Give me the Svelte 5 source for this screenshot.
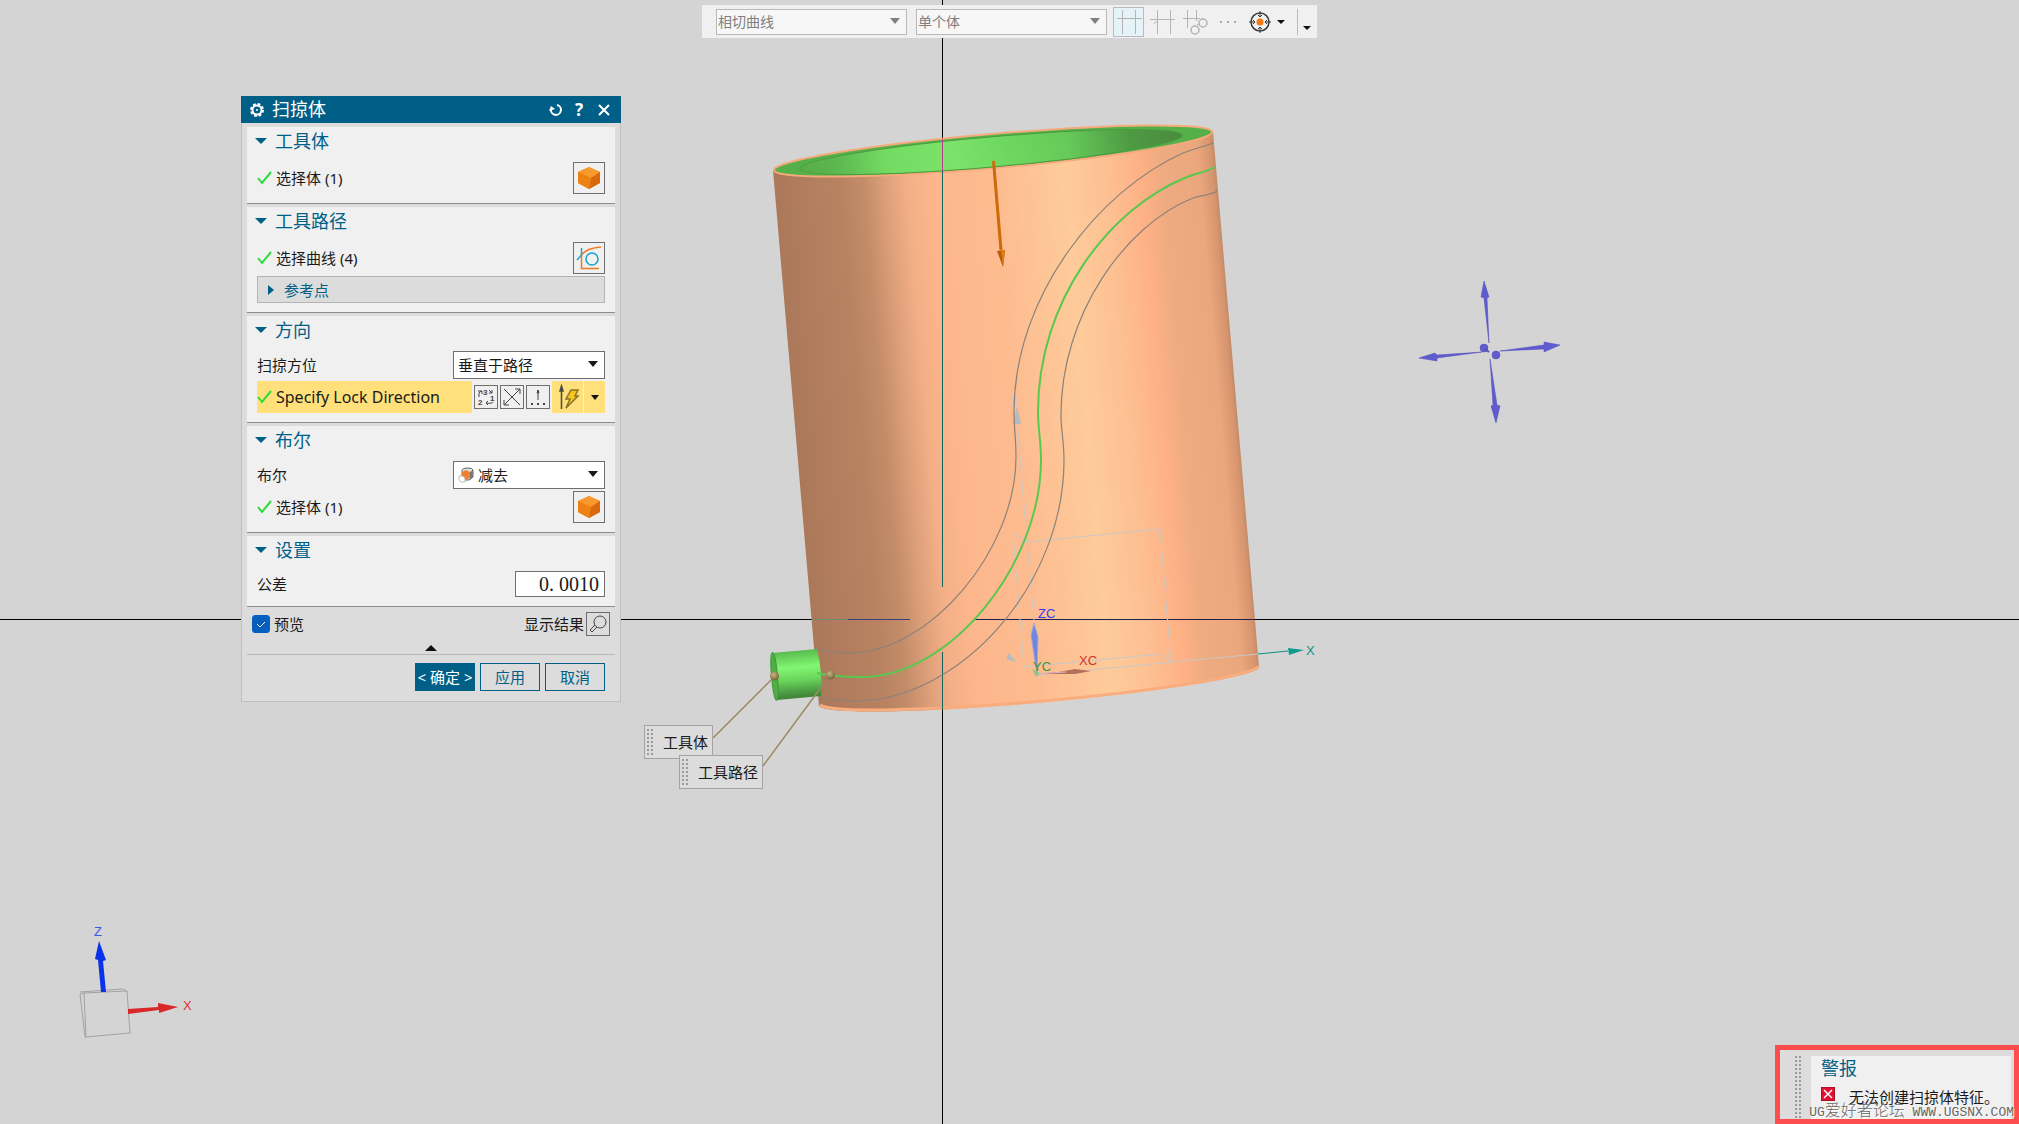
<script lang="ts">
	let curveRule = $state('相切曲线');
	let bodyRule = $state('单个体');
	let orientation = $state('垂直于路径');
	let booleanOp = $state('减去');
	let tolerance = $state('0. 0010');
	let preview = $state(true);

	const centerCurve =
		'M1215 167C1207 172 1197 173 1187 177C1110 208 1038 300 1038 412C1038 430 1041 440 1041 460C1041 565 950 677 862 677C848 677 835 677 816 673';
	const grooveCurves = [
		'M1213 143C1203 147 1193 149 1183 153C1100 190 1014 295 1014 412C1014 428 1016 440 1016 457C1016 550 930 653 849 653C838 653 828 652 816 649',
		'M1217 191C1209 196 1201 195 1193 198C1125 225 1061 315 1061 415C1061 430 1064 442 1064 460C1064 585 960 701 854 701C842 701 832 700 820 697'
	];
</script>

{#snippet cube()}
	<svg width="24" height="24" viewBox="0 0 24 24">
		<path d="M12 1l11 5v11l-11 6-11-6V6z" fill="#f08a1c" />
		<path d="M12 1l11 5-9 6L1 6z" fill="#f79a2b" />
		<path d="M14 12l9-6v11l-11 6z" fill="#d9690c" />
		<path d="M1 6l13 6-2 11-11-6z" fill="#ee8114" />
	</svg>
{/snippet}

{#snippet check()}
	<svg class="check" width="16" height="16" viewBox="0 0 16 16">
		<path d="M1 8l4 5L14 2" fill="none" stroke="#2bdc3c" stroke-width="2" />
	</svg>
{/snippet}

{#snippet heading(title: string)}
	<h3>
		<svg width="12" height="6" viewBox="0 0 12 6"><path d="M0 0h12L6 6z" fill="#005f87" /></svg>
		{title}
	</h3>
{/snippet}

{#snippet arrow()}
	<svg class="arrow" width="10" height="6" viewBox="0 0 10 6"><path d="M0 0h10L5 6z" fill="currentColor" /></svg>
{/snippet}

<main class="workspace">
	<svg class="scene" viewBox="0 0 2019 1124" preserveAspectRatio="xMidYMid slice" aria-hidden="true">
		<defs>
			<linearGradient id="skin" gradientUnits="userSpaceOnUse" x1="773" y1="170" x2="1213" y2="132">
				<stop offset="0" stop-color="#ab785a" />
				<stop offset="0.15" stop-color="#b98362" />
				<stop offset="0.2" stop-color="#c38c69" />
				<stop offset="0.25" stop-color="#dc9f79" />
				<stop offset="0.3" stop-color="#f4af87" />
				<stop offset="0.36" stop-color="#fdb68c" />
				<stop offset="0.5" stop-color="#fdbc8f" />
				<stop offset="0.66" stop-color="#fecb9a" />
				<stop offset="0.75" stop-color="#fdc092" />
				<stop offset="0.83" stop-color="#feb185" />
				<stop offset="0.88" stop-color="#eeaa80" />
				<stop offset="0.96" stop-color="#eba67c" />
				<stop offset="0.99" stop-color="#d7966f" />
				<stop offset="1" stop-color="#c58a66" />
			</linearGradient>
			<linearGradient id="bore" gradientUnits="userSpaceOnUse" x1="800" y1="168" x2="1183" y2="134">
				<stop offset="0" stop-color="#57ac4a" />
				<stop offset="0.1" stop-color="#5cb850" />
				<stop offset="0.22" stop-color="#73da62" />
				<stop offset="0.4" stop-color="#7be36a" />
				<stop offset="0.52" stop-color="#70d961" />
				<stop offset="0.7" stop-color="#66c959" />
				<stop offset="0.86" stop-color="#4e9a43" />
				<stop offset="1" stop-color="#4a8a3d" />
			</linearGradient>
			<linearGradient id="peg" gradientUnits="userSpaceOnUse" x1="796" y1="650" x2="800" y2="699">
				<stop offset="0" stop-color="#56b84c" />
				<stop offset="0.35" stop-color="#82f772" />
				<stop offset="0.6" stop-color="#6bd65d" />
				<stop offset="0.85" stop-color="#4c9b42" />
				<stop offset="1" stop-color="#3d7f35" />
			</linearGradient>
			<radialGradient id="ball" cx="0.4" cy="0.35" r="0.6">
				<stop offset="0" stop-color="#c9b783" />
				<stop offset="1" stop-color="#7d6a3f" />
			</radialGradient>
		</defs>

		<!-- crosshair -->
		<path d="M942.5 0V587M942.5 652V1124M0 619.5H910M975 619.5H2019" stroke="#000" />

		<!-- tube -->
		<path d="M773 170L819 706A221 17 -5 0 0 1259 667L1213 132z" fill="url(#skin)" />
		<path d="M820 705A221 17 -5 0 0 1259 666" fill="none" stroke="#f9ac7d" stroke-width="3" />
		<ellipse cx="993" cy="151" rx="220" ry="17" transform="rotate(-5 993 151)" fill="#56b04a" stroke="#f5aa7c" stroke-width="2" />
		<ellipse cx="991" cy="152" rx="192" ry="15" transform="rotate(-5 991 152)" fill="url(#bore)" stroke="#4a9c40" />
		<path d="M942.5 139v32" stroke="#b83a8c" />
		<path d="M942.5 171V587M942.5 652v58" stroke="#14635a" />
		<path d="M812 619.5h36" stroke="#6e8a78" />
		<path d="M848 619.5h62" stroke="#3d3f78" />
		<path d="M975 619.5h280" stroke="#21204a" />

		<!-- datum planes -->
		<g fill="none" stroke="#c9c8c6">
			<path d="M1013 533l11 134 136-13 11 8M1013 533l14 9 133-13 11 133M1027 542l7 78M1017 422l10 120" />
			<path d="M1036 675l222-21" />
		</g>
		<path d="M1013 424l4-18 4 18zM1009 653l7 9-10-3z" fill="#b3bcc0" />
		<path d="M1012 398l6 3M1012 404l6 4" stroke="#c8ccd0" stroke-width="2" />

		<!-- groove curves -->
		{#each grooveCurves as d}
			<path {d} fill="none" stroke="#8a827b" stroke-width="1.2" />
		{/each}
		<path d={centerCurve} fill="none" stroke="#5ac850" stroke-width="2" />

		<!-- lock direction -->
		<path d="M993.5 161L1001 250" stroke="#cd6a0a" stroke-width="3" />
		<path d="M997 251l8-1-2 17z" fill="#b85a08" />
		<path d="M1001 250l4 0-2 17z" fill="#de7a14" />

		<!-- work coordinates -->
		<path d="M1258 654l30-3" stroke="#0e9285" />
		<path d="M1288 648l16 2-15 5z" fill="#109a8d" />
		<path d="M1034 623l-3 12 6 40 1-38z" fill="#6f86dc" stroke="#a0aada" />
		<path d="M1036 674l23-2 16-3 16 2-16 3z" fill="#b5705c" />
		<path d="M1036 674l30-2" stroke="#d8b4c4" />
		<path d="M1032 669l8 4-4 4z" fill="#8fc28c" />
		<g class="label">
			<text x="1306" y="655" fill="#0e9285">X</text>
			<text x="1038" y="618" fill="#3a3af2">ZC</text>
			<text x="1033" y="671" fill="#3d9436">YC</text>
			<text x="1079" y="665" fill="#d4342a">XC</text>
		</g>

		<!-- tool body -->
		<path d="M772 653l45-4q6 24 4 47l-44 4z" fill="url(#peg)" />
		<ellipse cx="774.5" cy="676.5" rx="3" ry="24" transform="rotate(-5 774 676)" fill="#4fae46" stroke="#429a3a" />
		<path d="M817 673l16 3" stroke="#5ac850" stroke-width="2" />
		<path d="M771 680l-58 58M825 682l-62 84" stroke="#9c8a66" stroke-width="1.5" />
		<circle cx="774.5" cy="676" r="4.5" fill="url(#ball)" />
		<circle cx="830.5" cy="675" r="4.5" fill="url(#ball)" />

		<!-- view handle -->
		<g fill="#5f5ccf" stroke="#4f4cb8" stroke-width="0.5">
			<path d="M1484 281l5 16-2 1 2 45-5-45-3-1z" />
			<path d="M1496 423l-5-17 2-1-3-46 7 46 3 1z" />
			<path d="M1419 358l16-5 2 2 45-3-45 6v3z" />
			<path d="M1560 345l-16-3v3l-44 6 44-2v3z" />
			<circle cx="1484" cy="348" r="4" />
			<circle cx="1496" cy="355" r="4" />
		</g>
		<path d="M1485 349l4 3" stroke="#5350bc" stroke-width="2" />

		<!-- view triad -->
		<g fill="none" stroke="#a2a2a2">
			<path d="M84 993l43-2 3 42-44 4z" />
			<path d="M84 993l-4 1 5 43 1 1M80 992l42-3 5 2" />
		</g>
		<path d="M99 941l7 19-3 1 3 31h-5l-3-32-3-1z" fill="#0a32e6" />
		<path d="M128 1009l30-2v-4l20 4-19 6v-3l-31 4z" fill="#d82828" />
		<g class="label">
			<text x="94" y="936" fill="#3b57e6">Z</text>
			<text x="183" y="1010" fill="#dc3434">X</text>
		</g>
	</svg>

	<div class="toolbar">
		<div class="field">
			<select aria-label="曲线规则" bind:value={curveRule}>
				<option>相切曲线</option>
			</select>
			{@render arrow()}
		</div>
		<div class="field">
			<select aria-label="体规则" bind:value={bodyRule}>
				<option>单个体</option>
			</select>
			{@render arrow()}
		</div>
		<button class="tool active" aria-label="相交处停止">
			<svg width="28" height="28" viewBox="0 0 28 28"><path d="M7.5 2v24M20.5 2v24M2 10.500h25" /></svg>
		</button>
		<button class="tool" aria-label="跟随圆角">
			<svg width="28" height="28" viewBox="0 0 28 28"><path d="M9.5 2v24M22.500 2v24M2 11.500h25M6 16l5-5" /></svg>
		</button>
		<button class="tool" aria-label="路径选择">
			<svg width="28" height="28" viewBox="0 0 28 28">
				<path d="M6.5 2v18M15.5 2v11M2 10.500h17M16 17l3-1" />
				<g stroke-width="1.5"><circle cx="22" cy="15" r="4" /><circle cx="14" cy="22" r="4" /></g>
			</svg>
		</button>
		<button class="tool" aria-label="更多">
			<svg width="16" height="4" viewBox="0 0 16 4"><path d="M0 1h2v2H0zM7 1h2v2H7zM14 1h2v2h-2z" fill="#aaa" stroke="none" /></svg>
		</button>
		<button class="tool snap" aria-label="捕捉点">
			<svg width="24" height="24" viewBox="0 0 24 24">
				<circle cx="12" cy="12" r="9" stroke="#3c3c3c" stroke-width="1.5" />
				<path d="M12 1v6M12 17v6M1 12h6M17 12h6M10 5l2 2 2-2M10 19l2-2 2 2M5 10l2 2-2 2M19 10l-2 2 2 2" stroke="#3c3c3c" />
				<circle cx="12" cy="12" r="3.5" fill="#f47a10" stroke="none" />
			</svg>
			<svg width="8" height="4" viewBox="0 0 8 4"><path d="M0 0h8L4 4z" fill="#111" stroke="none" /></svg>
		</button>
		<button class="tool overflow" aria-label="工具栏选项">
			<svg width="8" height="4" viewBox="0 0 8 4"><path d="M0 0h8L4 4z" fill="#111" stroke="none" /></svg>
		</button>
	</div>

	<section class="dialog">
		<header>
			<svg width="14" height="14" viewBox="0 0 14 14">
				<circle cx="7" cy="7" r="4.5" fill="none" stroke="#fff" stroke-width="2" />
				<circle cx="7" cy="7" r="6" fill="none" stroke="#fff" stroke-width="2" stroke-dasharray="2.7 2" />
				<circle cx="7" cy="7" r="1" fill="#fff" />
			</svg>
			<h2>扫掠体</h2>
			<button aria-label="重置">
				<svg width="14" height="14" viewBox="0 0 14 14">
					<path d="M8 2a5 5 0 1 1-6 4" fill="none" stroke="#fff" stroke-width="2" /><path d="M0 8l2-5 4 3z" fill="#fff" />
				</svg>
			</button>
			<button class="help" aria-label="帮助">?</button>
			<button class="close" aria-label="关闭">
				<svg width="12" height="12" viewBox="0 0 12 12"><path d="M1 1l10 10M11 1L1 11" stroke="#fff" stroke-width="2" /></svg>
			</button>
		</header>

		<div class="body">
			<div class="group">
				{@render heading('工具体')}
				<div class="row">
					{@render check()}<span>选择体 (1)</span>
					<button class="pick" aria-label="选择体">{@render cube()}</button>
				</div>
			</div>

			<div class="group">
				{@render heading('工具路径')}
				<div class="row">
					{@render check()}<span>选择曲线 (4)</span>
					<button class="pick" aria-label="选择曲线">
						<svg width="26" height="26" viewBox="0 0 26 26" fill="none">
							<path d="M5.5 9v14.500H23M5 10Q11 3 25 2" stroke="#ee7a1c" stroke-width="1.5" />
							<path d="M5.500 3v7L1 15" stroke="#18a4cc" stroke-width="1.5" />
							<circle cx="16" cy="14" r="6" stroke="#18a4cc" stroke-width="1.5" />
						</svg>
					</button>
				</div>
				<button class="subgroup">
					<svg width="6" height="10" viewBox="0 0 6 10"><path d="M0 0l6 5-6 5z" fill="#005f87" /></svg>
					参考点
				</button>
			</div>

			<div class="group">
				{@render heading('方向')}
				<div class="row short">
					<label for="orientation">扫掠方位</label>
					<div class="field">
						<select id="orientation" bind:value={orientation}>
							<option>垂直于路径</option>
						</select>
						{@render arrow()}
					</div>
				</div>
				<div class="row vector">
					<div class="current">{@render check()}<span>Specify Lock Direction</span></div>
					<button class="mini" aria-label="循环方向">
						<svg width="20" height="20" viewBox="0 0 20 20">
							<g class="digits"><text x="7" y="8">3</text><text x="14" y="14">1</text><text x="2" y="18">2</text></g>
							<path d="M3 10V6l2-2M2 4h4v3M13 3l3 3M16 3v3h-3M17 15q-1 2-7 1M12 14l-2 2 2 2" />
						</svg>
					</button>
					<button class="mini" aria-label="反向">
						<svg width="20" height="20" viewBox="0 0 20 20"><path d="M2 2l16 16M18 2L2 18M13 2h5v5M2 13v5h5" /></svg>
					</button>
					<button class="mini" aria-label="矢量对话框">
						<svg width="20" height="20" viewBox="0 0 20 20">
							<path d="M10 13V3M9 6l1-3 1 3z" /><path d="M3 16h2v2H3zM9 16h2v2H9zM15 16h2v2h-2z" fill="#444" stroke="none" />
						</svg>
					</button>
					<button class="infer" aria-label="自动判断的矢量">
						<svg width="24" height="26" viewBox="0 0 24 26">
							<path d="M5.500 25V2M4 7l1.500-5L7 7z" fill="none" stroke="#4a4a4a" stroke-width="1.5" />
							<path d="M15 6h7l-3 6h3L10 24l4-9h-4z" fill="#f7c51e" stroke="#86722c" stroke-width="1.5" />
						</svg>
					</button>
					<button class="more" aria-label="矢量类型">
						<svg width="8" height="5" viewBox="0 0 8 5"><path d="M0 0h8L4 5z" fill="#111" /></svg>
					</button>
				</div>
			</div>

			<div class="group">
				{@render heading('布尔')}
				<div class="row short">
					<label for="boolean">布尔</label>
					<div class="field with-icon">
						<svg class="op" width="16" height="16" viewBox="0 0 16 16">
							<path d="M4 3q1-2 5-2 6 0 6 2v7l-4 3H4z" fill="#dedede" stroke="#666" />
							<path d="M12 5l3-2v7l-3 3z" fill="#777" />
							<path d="M4 5l4-2 4 2v6l-4 2-4-3z" fill="#ee8030" />
							<path d="M1 9q5-1 6 3v3q-5 1-6-2z" fill="#fff" stroke="#bbb" />
						</svg>
						<select id="boolean" bind:value={booleanOp}>
							<option>减去</option>
						</select>
						{@render arrow()}
					</div>
				</div>
				<div class="row">
					{@render check()}<span>选择体 (1)</span>
					<button class="pick" aria-label="选择目标体">{@render cube()}</button>
				</div>
			</div>

			<div class="group">
				{@render heading('设置')}
				<div class="row tolerance">
					<label for="tolerance">公差</label>
					<input id="tolerance" type="text" bind:value={tolerance} />
				</div>
			</div>
		</div>

		<div class="preview">
			<div class="tick">
				<input id="preview" type="checkbox" bind:checked={preview} />
				{#if preview}
					<svg width="18" height="18" viewBox="0 0 18 18"><path d="M5 9l3 3 5-5" fill="none" stroke="#fff" /></svg>
				{/if}
			</div>
			<label for="preview">预览</label>
			<span class="result">显示结果</span>
			<button class="mini" aria-label="显示结果">
				<svg width="20" height="20" viewBox="0 0 20 20"><circle cx="12" cy="8" r="6" /><path d="M7 11l-5 5 2 2 5-5" /></svg>
			</button>
		</div>
		<button class="collapse" aria-label="折叠">
			<svg width="12" height="6" viewBox="0 0 12 6"><path d="M0 6h12L6 0z" fill="#111" /></svg>
		</button>
		<footer>
			<button class="primary">&lt; 确定 &gt;</button>
			<button>应用</button>
			<button>取消</button>
		</footer>
	</section>

	<div class="tag body-tag"><i class="grip"></i>工具体</div>
	<div class="tag path-tag"><i class="grip"></i>工具路径</div>

	<aside class="alert">
		<i class="grip"></i>
		<div class="message">
			<h3>警报</h3>
			<p>
				<svg width="14" height="14" viewBox="0 0 14 14">
					<path d="M0 0h14v14H0z" fill="#e01030" stroke="#8c1020" /><path d="M3 3l8 8M11 3l-8 8" stroke="#fff" stroke-width="1.5" />
				</svg>
				无法创建扫掠体特征。
			</p>
		</div>
		<div class="watermark">UG<span>爱好者论坛</span> WWW.UGSNX.COM</div>
	</aside>
</main>

<style>
	:global(body) {
		background: #d4d4d4;
	}

	.workspace {
		position: relative;
		min-height: 100vh;
		overflow: hidden;
		font-family: 'Noto Sans', 'Noto Sans CJK SC', sans-serif;
		font-size: 15px;
		line-height: 20px;
		color: #1a1a1a;
	}

	.scene {
		position: absolute;
		inset: 0;
		width: 100%;
		height: 100%;
	}

	.label {
		font-family: 'Liberation Sans', sans-serif;
		font-size: 13px;
	}

	h2,
	h3,
	p {
		margin: 0;
		font-weight: 400;
	}

	button,
	select,
	input {
		box-sizing: border-box;
		margin: 0;
		padding: 0;
		border: 0;
		border-radius: 0;
		background: none;
		color: inherit;
		font: inherit;
	}

	svg {
		flex: none;
	}

	button {
		display: flex;
		align-items: center;
		justify-content: center;
	}

	.field {
		position: relative;
		display: block;
		height: 28px;
	}

	.field select {
		display: block;
		width: 100%;
		height: 100%;
		padding: 0 20px 0 4px;
		border: 1px solid #6e6e6e;
		background: #fff;
		appearance: none;
	}

	.arrow {
		position: absolute;
		right: 7px;
		top: 50%;
		margin-top: -4px;
		pointer-events: none;
	}

	/* selection toolbar */
	.toolbar {
		position: relative;
		display: flex;
		align-items: center;
		box-sizing: border-box;
		width: 615px;
		height: 33px;
		margin: 5px auto 0;
		padding-left: 14px;
		background: #f0f0f0;
	}

	.toolbar .field {
		width: 191px;
		height: 26px;
		margin-right: 9px;
		color: #808080;
		font-size: 14px;
	}

	.toolbar .field select {
		padding-left: 1px;
		border-color: #b9b9b9;
		background: #f7f7f7;
	}

	.tool {
		width: 31px;
		height: 30px;
		margin-right: 2px;
		fill: none;
		stroke: #b4b4b4;
	}

	.tool.active {
		margin-left: -3px;
		border: 1px solid #b4bcc0;
		background: #e5f2f7;
	}

	.tool.snap {
		width: 50px;
		padding-left: 3px;
		gap: 5px;
		justify-content: flex-start;
	}

	.tool.overflow {
		flex: 1;
		height: 26px;
		margin: 0;
		padding: 12px 2px 0 0;
		border-left: 1px solid #bbb;
	}

	/* dialog */
	.dialog {
		position: absolute;
		left: 241px;
		top: 96px;
		width: 380px;
		box-sizing: border-box;
		border: 1px solid #bfbfbf;
		border-top: 0;
		background: #dcdcdc;
	}

	.dialog header {
		display: flex;
		align-items: center;
		height: 27px;
		margin: 0 -1px;
		padding: 0 9px;
		background: #005f87;
		color: #fff;
	}

	.dialog h2 {
		flex: 1;
		margin-left: 8px;
		font-size: 18px;
		line-height: 27px;
	}

	.dialog header button {
		width: 16px;
		margin-left: 7px;
	}

	.dialog header .help {
		font-size: 17px;
		font-weight: 700;
	}

	.dialog header .close {
		margin-left: 9px;
	}

	.body {
		display: flex;
		flex-direction: column;
		gap: 3px;
		padding: 4px 5px 0;
	}

	.group {
		padding: 0 10px 9px;
		border-bottom: 1px solid #8c8c8c;
		background: #f0f0f0;
	}

	.group h3 {
		display: flex;
		align-items: center;
		gap: 8px;
		height: 28px;
		margin: 0 0 7px -2px;
		color: #005f87;
		font-size: 18px;
	}

	.row {
		display: flex;
		align-items: center;
		height: 32px;
	}

	.check {
		margin-right: 3px;
	}

	.pick {
		width: 32px;
		height: 32px;
		margin-left: auto;
		border: 1px solid #6e6e6e;
		background: #f0f0f0;
	}

	.subgroup {
		width: 100%;
		height: 27px;
		margin-top: 2px;
		padding-left: 10px;
		gap: 10px;
		justify-content: flex-start;
		border: 1px solid #b4b4b4;
		background: #dcdcdc;
		color: #005f87;
	}

	.row.short {
		height: 28px;
		margin-bottom: 2px;
	}

	.row .field {
		width: 152px;
		margin-left: auto;
	}

	.op {
		position: absolute;
		left: 5px;
		top: 6px;
	}

	.with-icon select {
		padding-left: 24px;
	}

	.vector {
		gap: 2px;
	}

	.current {
		flex: 1;
		display: flex;
		align-items: center;
		height: 32px;
		background: #ffe07a;
		font-size: 16px;
	}

	.mini {
		width: 24px;
		height: 24px;
		border: 1px solid #6e6e6e;
		background: #f0f0f0;
		fill: none;
		stroke: #444;
	}

	.digits {
		font-size: 8px;
		font-weight: 700;
		line-height: 8px;
		fill: #444;
		stroke: none;
	}

	.digits text {
		font-family: 'Liberation Sans', sans-serif;
	}

	.infer {
		width: 31px;
		height: 32px;
		background: #ffe07a;
	}

	.more {
		width: 21px;
		height: 32px;
		margin-left: -1px;
		background: #ffe07a;
	}

	.row.tolerance {
		height: 26px;
	}

	.tolerance input {
		width: 90px;
		height: 26px;
		margin-left: auto;
		padding-right: 5px;
		border: 1px solid #6e6e6e;
		background: #fff;
		font-family: 'Liberation Serif', serif;
		font-size: 20px;
		text-align: right;
	}

	.preview {
		display: flex;
		align-items: center;
		height: 24px;
		padding: 5px 10px;
	}

	.tick {
		position: relative;
		width: 18px;
		height: 18px;
		margin-right: 4px;
	}

	.tick input {
		display: block;
		width: 18px;
		height: 18px;
		border: 1px solid #6e6e6e;
		border-radius: 3px;
		background: #fff;
		appearance: none;
	}

	.tick input:checked {
		border-color: #0560bd;
		background: #0560bd;
	}

	.tick svg {
		position: absolute;
		inset: 0;
		pointer-events: none;
	}

	.result {
		margin-left: auto;
		margin-right: 2px;
	}

	.preview .mini {
		background: #dcdcdc;
	}

	.collapse {
		width: calc(100% - 10px);
		height: 14px;
		margin: 0 5px;
		border-bottom: 1px solid #b9b9b9;
	}

	.dialog footer {
		display: flex;
		justify-content: flex-end;
		gap: 5px;
		padding: 8px 15px 10px;
	}

	.dialog footer button {
		width: 60px;
		height: 28px;
		border: 1px solid #005f87;
		color: #005f87;
		white-space: nowrap;
	}

	.dialog footer .primary {
		background: #005f87;
		color: #fff;
	}

	/* callouts */
	.grip {
		width: 6px;
		background: conic-gradient(transparent 75%, #9a9a9a 0) 0 0 / 4px 4px;
	}

	.tag {
		position: absolute;
		display: flex;
		align-items: center;
		box-sizing: border-box;
		height: 34px;
		padding: 0 4px 0 2px;
		gap: 10px;
		border: 1px solid #a3a3a3;
		background: #dcdcdc;
	}

	.tag .grip {
		height: 26px;
	}

	.body-tag {
		left: 644px;
		top: 725px;
	}

	.path-tag {
		left: 679px;
		top: 755px;
	}

	/* alert */
	.alert {
		position: absolute;
		right: 0;
		bottom: 0;
		display: flex;
		box-sizing: border-box;
		width: 244px;
		height: 79px;
		padding: 6px 3px 0 15px;
		gap: 10px;
		border: 5px solid #fe4d4d;
		background: #dcdcdc;
	}

	.alert .grip {
		height: 62px;
	}

	.message {
		flex: 1;
		padding-left: 10px;
		background: #f0f0f0;
	}

	.message h3 {
		color: #005f87;
		font-size: 18px;
		line-height: 24px;
	}

	.message p {
		display: flex;
		gap: 14px;
		padding-top: 7px;
		white-space: nowrap;
	}

	.watermark {
		position: absolute;
		right: 0;
		bottom: -4px;
		color: #666;
		font-family: 'Liberation Mono', 'Noto Sans CJK SC', monospace;
		font-size: 13px;
		white-space: nowrap;
		text-shadow: 1px 1px 0 #fff;
	}

	.watermark span {
		font-size: 16px;
		font-weight: 300;
	}
</style>
